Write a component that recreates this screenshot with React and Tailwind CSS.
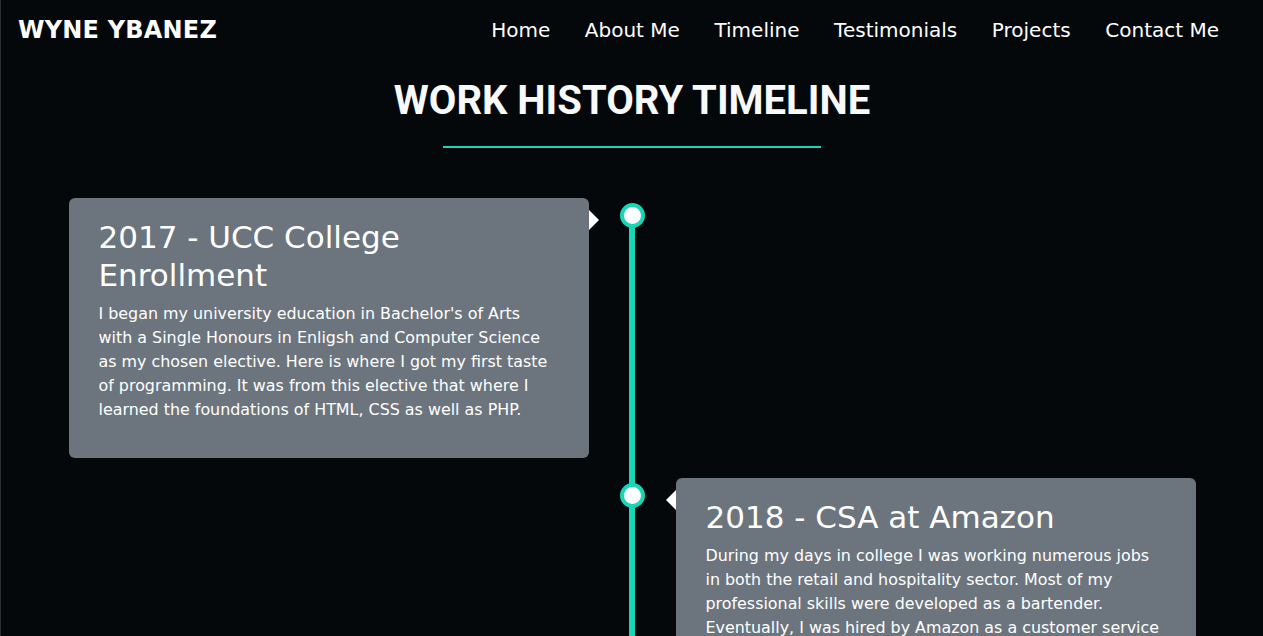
import React from 'react';

const NAV_LINKS = ['Home', 'About Me', 'Timeline', 'Testimonials', 'Projects', 'Contact Me'];

const EVENTS = [
  {
    side: 'left',
    title: '2017 - UCC College Enrollment',
    body: "I began my university education in Bachelor's of Arts with a Single Honours in Enligsh and Computer Science as my chosen elective. Here is where I got my first taste of programming. It was from this elective that where I learned the foundations of HTML, CSS as well as PHP.",
  },
  {
    side: 'right',
    title: '2018 - CSA at Amazon',
    body: 'During my days in college I was working numerous jobs in both the retail and hospitality sector. Most of my professional skills were developed as a bartender. Eventually, I was hired by Amazon as a customer service associate where I learned how to handle customers at scale.',
  },
];

const sans = "font-['DejaVu_Sans',sans-serif]";

// Single timeline card, arrow points towards the centre line
const TimelineCard = ({ event }) => (
  <div className="relative rounded-[6px] bg-[#6c757d] px-[30px] pt-[20px] pb-[20px] text-white">
    {event.side === 'left' ? (
      <span className="absolute top-[12px] -right-[10px] h-0 w-0 border-y-[10px] border-y-transparent border-l-[10px] border-l-white" />
    ) : (
      <span className="absolute top-[12px] -left-[10px] h-0 w-0 border-y-[10px] border-y-transparent border-r-[10px] border-r-white" />
    )}
    <h3 className="mb-2 text-[31px] leading-[38px] font-normal">{event.title}</h3>
    <p className="mb-4 text-[15.9px] leading-[24px]">{event.body}</p>
  </div>
);

const App = () => {
  return (
    <div className={`min-h-screen border-l border-[#2b3036] bg-[#05080b] text-white ${sans}`}>
      <nav className="flex h-[60px] items-center justify-between pl-[17px] pr-[44px]">
        <a href="#" className="text-[24px] font-bold tracking-[0.2px] text-white">
          WYNE YBANEZ
        </a>
        <ul className="flex gap-[34.6px] text-[20px]">
          {NAV_LINKS.map((link) => (
            <li key={link}>
              <a href="#" className="text-white">
                {link}
              </a>
            </li>
          ))}
        </ul>
      </nav>

      <section className="pt-[16px] text-center">
        <h2 className="font-['Roboto',sans-serif] text-[40px] leading-[50px] font-bold text-[#f8f9fa]">
          WORK HISTORY TIMELINE
        </h2>
        <div className="mx-auto mt-[20px] h-[2px] w-[30%] bg-[#17d7b7]" />
      </section>

      <div className="mx-auto mt-[50px] w-[1127px]">
        {EVENTS.map((event, index) => (
          <div key={event.title} className="grid grid-cols-[520px_87px_520px]">
            <div className="pb-[20px]">
              {event.side === 'left' && <TimelineCard event={event} />}
            </div>
            <div className="relative flex justify-center">
              <span
                className={`absolute bottom-0 w-[6px] bg-[#17d7b7] ${index === 0 ? 'top-[17px]' : 'top-0'}`}
              />
              <span className="absolute top-[5px] h-[25px] w-[25px] rounded-full border-4 border-[#17d7b7] bg-white" />
            </div>
            <div className="pb-[20px]">
              {event.side === 'right' && <TimelineCard event={event} />}
            </div>
          </div>
        ))}
      </div>
    </div>
  );
};

export default App;
